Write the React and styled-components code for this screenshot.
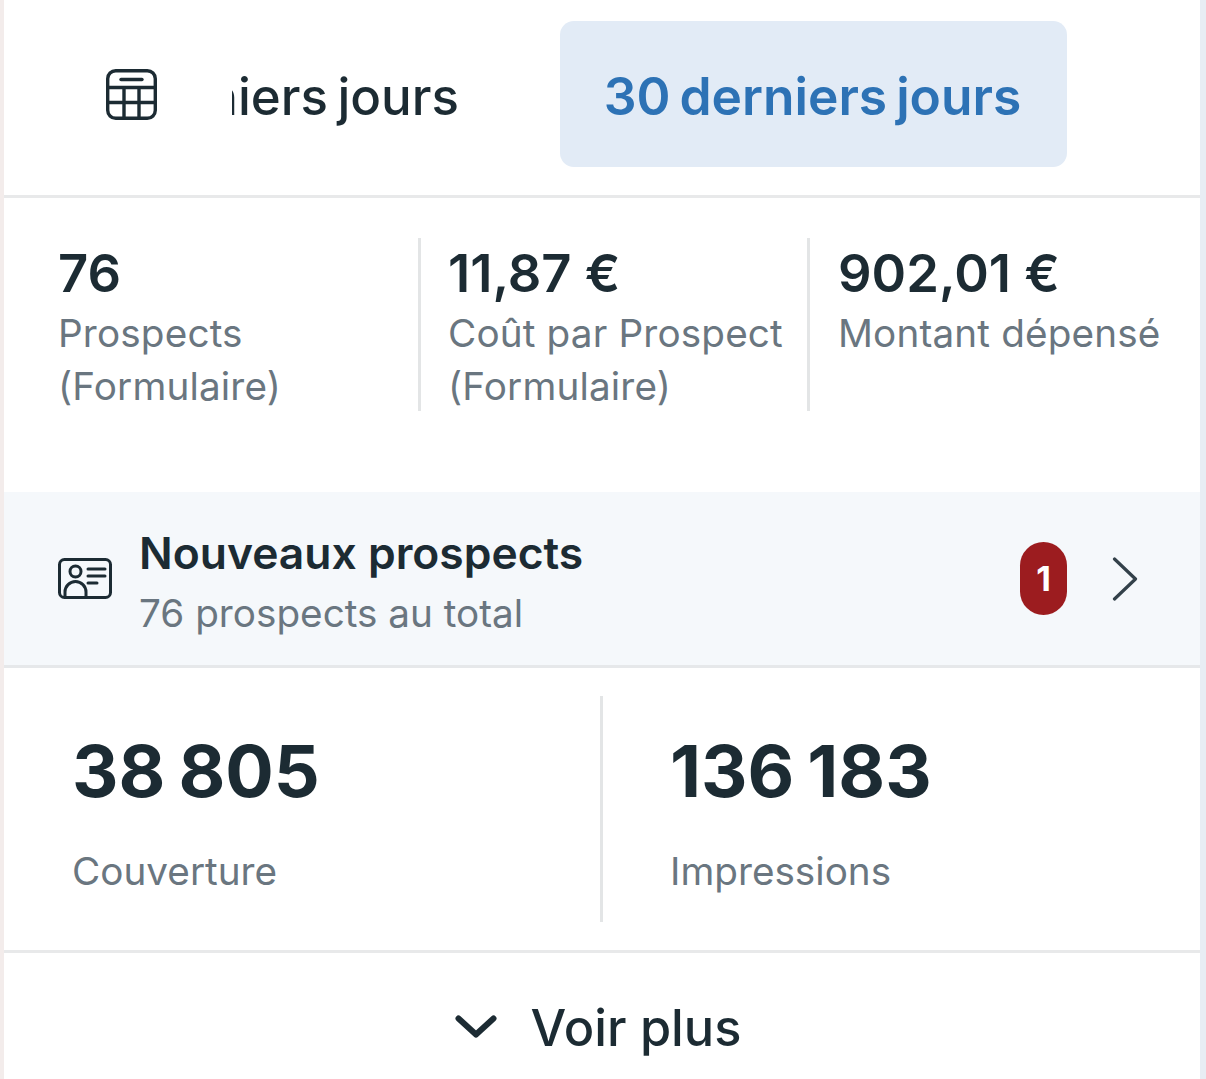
import styled, { createGlobalStyle } from 'styled-components';

const GlobalStyle = createGlobalStyle`
  html, body {
    margin: 0;
    padding: 0;
    background: #fff;
  }
  body {
    font-family: "Inter", "Roboto", sans-serif;
    color: #1c2b33;
  }
  * {
    box-sizing: border-box;
  }
`;

const Page = styled.div`
  width: 1206px;
  height: 1079px;
  overflow: hidden;
  background: linear-gradient(90deg, #f3eceb 0 4px, #fff 4px 1200px, #e8edf4 1200px);
`;

const Card = styled.div`
  margin-left: 4px;
  width: 1196px;
  height: 100%;
  background: #fff;
  border-radius: 12px 12px 0 0;
  display: flex;
  flex-direction: column;
`;

const TabBar = styled.div`
  height: 198px;
  border-bottom: 3px solid #e8e9ea;
  display: flex;
  align-items: flex-start;
  padding: 21px 0 0 102px;
`;

const IconBox = styled.div`
  width: 51px;
  height: 146px;
  display: flex;
  align-items: center;
  color: #1c2b33;
`;

const ClippedTab = styled.div`
  margin-left: 75px;
  width: 227px;
  height: 146px;
  padding-top: 4px;
  overflow: hidden;
  display: flex;
  justify-content: flex-end;
  align-items: center;
  white-space: nowrap;
  font-size: 51px;
  font-weight: 500;
  word-spacing: -4px;
`;

const ActiveTab = styled.div`
  margin-left: 101px;
  width: 507px;
  height: 146px;
  padding: 3px 2px 0 0;
  border-radius: 14px;
  background: #e2ebf6;
  color: #2d72b5;
  display: flex;
  align-items: center;
  justify-content: center;
  white-space: nowrap;
  font-size: 51.5px;
  font-weight: 600;
  word-spacing: -4px;
`;

const StatsRow = styled.div`
  height: 294px;
  padding: 40px 0 0 54px;
  display: flex;
  align-items: flex-start;
`;

const Stat = styled.div`
  width: ${(p) => p.$width}px;
  height: 173px;
  padding: 2px 0 0 ${(p) => p.$pad}px;
  border-left: ${(p) => (p.$first ? 'none' : '3px solid #e3e5e6')};
`;

const StatValue = styled.div`
  font-size: 52.5px;
  line-height: 66px;
  font-weight: 600;
  white-space: nowrap;
`;

const StatLabel = styled.div`
  margin-top: 1px;
  font-size: 38.7px;
  line-height: 53px;
  letter-spacing: 0.15px;
  color: #6a7680;
  white-space: nowrap;
`;

const LeadsBanner = styled.div`
  height: 176px;
  background: #f5f8fb;
  border-bottom: 3px solid #e6e8ea;
  display: flex;
  align-items: center;
  padding: 0 62px 0 54px;
`;

const LeadsText = styled.div`
  margin-left: 27px;
  padding-top: 9px;
  flex: 1;
`;

const LeadsTitle = styled.div`
  font-size: 44.4px;
  line-height: 60px;
  font-weight: 600;
  white-space: nowrap;
`;

const LeadsSub = styled.div`
  font-size: 38.7px;
  line-height: 60px;
  color: #6a7680;
  white-space: nowrap;
`;

const Badge = styled.div`
  width: 47px;
  height: 73px;
  border-radius: 24px;
  background: #9c1c1f;
  color: #fff;
  font-size: 34px;
  font-weight: 700;
  display: flex;
  align-items: center;
  justify-content: center;
  margin-right: 45px;
`;

const MetricsRow = styled.div`
  height: 285px;
  border-bottom: 3px solid #e8e9ea;
  padding-top: 28px;
  display: flex;
  align-items: flex-start;
`;

const Metric = styled.div`
  height: 226px;
  width: ${(p) => p.$width}px;
  padding-left: ${(p) => p.$pad}px;
  border-left: ${(p) => (p.$divider ? '3px solid #e3e5e6' : 'none')};
`;

const MetricValue = styled.div`
  font-size: 72px;
  line-height: 92px;
  margin-top: 29px;
  font-weight: 700;
  white-space: nowrap;
  word-spacing: -4px;
`;

const MetricLabel = styled.div`
  margin-top: 29px;
  font-size: 38.7px;
  line-height: 50px;
  color: #6a7680;
  white-space: nowrap;
`;

const MoreRow = styled.div`
  flex: 1;
  display: flex;
  justify-content: center;
  align-items: center;
  gap: 34px;
  padding: 22px 8px 0 0;
  font-size: 50.5px;
  font-weight: 500;
`;

function CalendarIcon() {
  return (
    <svg width="51" height="51" viewBox="0 0 51 51" fill="none" stroke="currentColor" strokeWidth="3.4">
      <rect x="1.7" y="1.7" width="47.6" height="47.6" rx="8" />
      <path d="M1.7 18.5h47.6M1.7 33.5h47.6M18 18.5v30.8M33 18.5v30.8" />
      <path d="M15 10.5h21" strokeLinecap="round" />
    </svg>
  );
}

function IdCardIcon() {
  return (
    <svg width="54" height="41" viewBox="0 0 54 41" fill="none" stroke="#1c2b33" strokeWidth="3">
      <rect x="1.5" y="1.5" width="51" height="38" rx="5" />
      <circle cx="17.5" cy="13.5" r="5.5" />
      <path d="M7 39v-5a10.5 10.5 0 0 1 21 0v5" />
      <path d="M30 11h17M30 18h17M30 25h9" strokeLinecap="round" />
    </svg>
  );
}

function ChevronRight() {
  return (
    <svg width="26" height="44" viewBox="0 0 26 44" fill="none" stroke="#33414a" strokeWidth="3.2" strokeLinecap="round" strokeLinejoin="round">
      <path d="M2.5 2l21 20-21 20" />
    </svg>
  );
}

function ChevronDown() {
  return (
    <svg width="42" height="26" viewBox="0 0 42 26" fill="none" stroke="#1c2b33" strokeWidth="6" strokeLinecap="round" strokeLinejoin="round">
      <path d="M3.5 4.5L21 20.5 38.5 4.5" />
    </svg>
  );
}

export default function App() {
  return (
    <Page>
      <GlobalStyle />
      <Card>
        <TabBar>
          <IconBox>
            <CalendarIcon />
          </IconBox>
          <ClippedTab>7 derniers jours</ClippedTab>
          <ActiveTab>30 derniers jours</ActiveTab>
        </TabBar>
        <StatsRow>
          <Stat $first $width={360} $pad={0}>
            <StatValue>76</StatValue>
            <StatLabel>
              Prospects
              <br />
              (Formulaire)
            </StatLabel>
          </Stat>
          <Stat $width={389} $pad={27}>
            <StatValue>11,87 €</StatValue>
            <StatLabel>
              Coût par Prospect
              <br />
              (Formulaire)
            </StatLabel>
          </Stat>
          <Stat $width={380} $pad={28}>
            <StatValue>902,01 €</StatValue>
            <StatLabel>Montant dépensé</StatLabel>
          </Stat>
        </StatsRow>
        <LeadsBanner>
          <IdCardIcon />
          <LeadsText>
            <LeadsTitle>Nouveaux prospects</LeadsTitle>
            <LeadsSub>76 prospects au total</LeadsSub>
          </LeadsText>
          <Badge>1</Badge>
          <ChevronRight />
        </LeadsBanner>
        <MetricsRow>
          <Metric $width={596} $pad={68}>
            <MetricValue>38 805</MetricValue>
            <MetricLabel>Couverture</MetricLabel>
          </Metric>
          <Metric $divider $width={600} $pad={67}>
            <MetricValue>136 183</MetricValue>
            <MetricLabel>Impressions</MetricLabel>
          </Metric>
        </MetricsRow>
        <MoreRow>
          <ChevronDown />
          Voir plus
        </MoreRow>
      </Card>
    </Page>
  );
}
